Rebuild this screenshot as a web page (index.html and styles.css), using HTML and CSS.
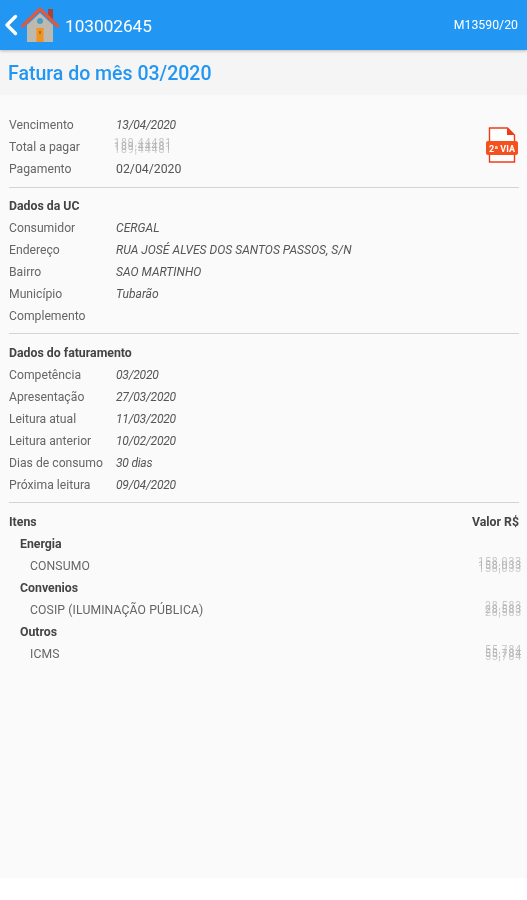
FILE: index.html
```html
<!DOCTYPE html>
<html lang="pt">
<head>
<meta charset="utf-8">
<title>Fatura</title>
<link rel="stylesheet" href="styles.css">
</head>
<body>
<div class="page">
  <header class="appbar">
    <svg class="back" viewBox="0 0 14 22" width="14" height="22"><path d="M11.5 2.500 3 11l8.500 8.500" fill="none" stroke="#fff" stroke-width="3.400" stroke-linecap="round" stroke-linejoin="round"/></svg>
    <svg class="home" viewBox="0 0 38 36" width="38" height="36">
      <rect x="27" y="2" width="5" height="11" fill="#a5453a"/>
      <path d="M19 6 6 18v17h26V18z" fill="#bdb9ae"/>
      <rect x="15.500" y="21" width="7" height="14" fill="#f0941f"/>
      <rect x="18" y="24" width="2" height="3" fill="#b96c10"/>
      <circle cx="19" cy="14" r="3" fill="#4b9cc9"/>
      <path d="M1.500 19 19 2 36.500 19" fill="none" stroke="#dc5a42" stroke-width="3.200" stroke-linejoin="round" stroke-linecap="round"/>
    </svg>
    <span class="uc">103002645</span>
    <span class="ref">M13590/20</span>
  </header>
  <div class="titlebar"><h1>Fatura do mês 03/2020</h1></div>
  <main class="content">
    <section class="block top">
      <div class="row"><span class="label">Vencimento</span><span class="value date">13/04/2020</span></div>
      <div class="row"><span class="label">Total a pagar</span><span class="smear left">189,44481</span></div>
      <div class="row"><span class="label">Pagamento</span><span class="value plain">02/04/2020</span></div>
      <svg class="pdf" viewBox="0 0 32 36" width="32" height="36">
        <path d="M3.500 1h18l7 7v27h-25z" fill="#fff" stroke="#f03c14" stroke-width="1.400"/>
        <path d="M21 1v7h7.500z" fill="#f03c14"/>
        <rect x="0" y="14" width="32" height="14" rx="2" fill="#f4511e"/>
        <text x="16" y="24.500" class="pdf-text" text-anchor="middle">2ª VIA</text>
      </svg>
    </section>
    <section class="block tight">
      <div class="row head">Dados da UC</div>
      <div class="row"><span class="label">Consumidor</span><span class="value">CERGAL</span></div>
      <div class="row"><span class="label">Endereço</span><span class="value">RUA JOSÉ ALVES DOS SANTOS PASSOS, S/N</span></div>
      <div class="row"><span class="label">Bairro</span><span class="value">SAO MARTINHO</span></div>
      <div class="row"><span class="label">Município</span><span class="value">Tubarão</span></div>
      <div class="row"><span class="label">Complemento</span></div>
    </section>
    <section class="block tight">
      <div class="row head">Dados do faturamento</div>
      <div class="row"><span class="label">Competência</span><span class="value date">03/2020</span></div>
      <div class="row"><span class="label">Apresentação</span><span class="value date">27/03/2020</span></div>
      <div class="row"><span class="label">Leitura atual</span><span class="value date">11/03/2020</span></div>
      <div class="row"><span class="label">Leitura anterior</span><span class="value date">10/02/2020</span></div>
      <div class="row"><span class="label">Dias de consumo</span><span class="value date">30 dias</span></div>
      <div class="row"><span class="label">Próxima leitura</span><span class="value date">09/04/2020</span></div>
    </section>
    <section class="items">
      <div class="row split head"><span>Itens</span><span>Valor R$</span></div>
      <div class="row head lvl1">Energia</div>
      <div class="row split lvl2"><span class="label">CONSUMO</span><span class="smear">158,033</span></div>
      <div class="row head lvl1">Convenios</div>
      <div class="row split lvl2"><span class="label">COSIP (ILUMINAÇÃO PÚBLICA)</span><span class="smear">28,583</span></div>
      <div class="row head lvl1">Outros</div>
      <div class="row split lvl2"><span class="label">ICMS</span><span class="smear">55,784</span></div>
    </section>
  </main>
</div>
</body>
</html>
```

FILE: styles.css
```css
* { box-sizing: border-box; }
html, body { margin: 0; background: #fff; }
body { font-family: Roboto, sans-serif; color: #444; }
.page { width: 527px; height: 900px; overflow: hidden; }

.appbar {
  height: 50px;
  background: #2196f3;
  display: flex;
  align-items: center;
  padding: 0 9px 0 4px;
  box-shadow: 0 1px 3px rgba(0, 0, 0, .25);
  position: relative;
  color: #fff;
  filter: blur(.45px);
}
.back { margin-right: 3px; }
.home { margin-right: 6px; }
.uc { font-size: 17.200px; flex: 1; margin-top: 1px; }
.ref { font-size: 12.300px; }

.titlebar { height: 45px; background: #f5f5f5; display: flex; align-items: center; padding: 2px 0 0 8px; }
h1 { margin: 0; font-size: 19.500px; font-weight: 500; color: #2196f3; filter: blur(.35px); }

.content { height: 783px; background: #fafafa; padding: 19px 8px 0 9px; filter: blur(.5px); }
.block { border-bottom: 1px solid #d4d4d4; padding-bottom: 7px; margin-bottom: 7px; }
.block.tight { padding-bottom: 6px; margin-bottom: 8px; }
.top { position: relative; }
.row { height: 22px; display: flex; align-items: center; font-size: 12.200px; }
.label { width: 107px; flex: none; color: #666; }
.value { font-style: italic; color: #555; font-size: 12.100px; }
.value.date { letter-spacing: -.25px; }
.value.plain { font-style: normal; font-size: 12.300px; }
.head { font-weight: 700; color: #444; font-size: 12.300px; }
.split { justify-content: space-between; }
.lvl1 { padding-left: 11px; }
.lvl2 { padding-left: 21px; }
.lvl2 .label { width: auto; font-size: 12.200px; letter-spacing: .12px; }

.smear {
  font-size: 10.500px;
  line-height: 10px;
  color: #b4b4b4;
  letter-spacing: .9px;
  margin-right: -3px;
  text-shadow: 0 -4px .5px #c4c4c4, 0 3px .5px #c8c8c8;
}
.smear.left { letter-spacing: 1px; margin: 0 0 0 -2px; }

.pdf { position: absolute; right: 1px; top: 13px; }
.pdf-text { font: 700 9px Roboto, sans-serif; fill: #fff; }
```
